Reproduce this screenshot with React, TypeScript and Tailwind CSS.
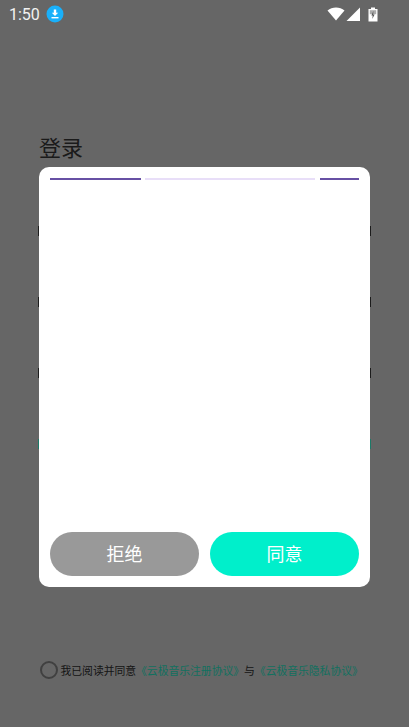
import React from 'react';

const cjk = { fontFamily: '"Noto Sans CJK SC", "Noto Sans", sans-serif' };

const StatusBar = () => (
  <div className="flex h-[28px] items-center pl-[9px] pr-[31px]">
    <span className="pt-[1px] text-[16px] leading-none text-[#f2f2f2]" style={{ fontFamily: 'Roboto, sans-serif' }}>
      1:50
    </span>
    <svg className="ml-[6px]" width="18" height="18" viewBox="0 0 18 18">
      <circle cx="9" cy="9" r="8.5" fill="#19b0fa" />
      <path d="M7.8 4.5h2.4v3.3h2L9 11 5.8 7.8h2z" fill="#fff" />
      <rect x="5.5" y="12" width="7" height="1.4" fill="#fff" />
    </svg>
    <div className="ml-auto flex items-center">
      <svg width="18" height="14" viewBox="0 0 18 14">
        <path d="M0.5 3.6C5 -0.4 13 -0.4 17.5 3.6L9 13.5z" fill="#fff" />
      </svg>
      <svg className="ml-[1px]" width="14" height="14" viewBox="0 0 14 14">
        <path d="M14 0.5V14H0.5z" fill="#fff" />
      </svg>
      <svg className="ml-[8px]" width="10" height="15" viewBox="0 0 10 15">
        <path d="M3 0.5h4v1.5h2.5v12.5h-9V2H3z" fill="#fff" />
        <path d="M1.8 3.2h6.4v4H1.8z" fill="#666666" opacity="0.55" />
        <path d="M5.4 4L3.4 8.4h1.3L4.3 12l2.3-4.6H5.2z" fill="#555555" />
      </svg>
    </div>
  </div>
);

const BehindRow = ({ teal }: { teal?: boolean }) => (
  <div className={`h-[10px] w-[333px] border-x ${teal ? 'border-[#1d7a68]' : 'border-[#1c1c1c]'}`} />
);

const App = () => {
  return (
    <div className="relative flex h-[727px] w-[409px] flex-col overflow-hidden bg-[#666666]" style={cjk}>
      <StatusBar />

      <h1 className="ml-[39px] mt-[102px] text-[22px] font-normal leading-[32px] text-[#1a1a1a]">登录</h1>

      {/* form under the dialog, only its edges show */}
      <div className="ml-[38px] mt-[64px] flex flex-col gap-[61px]">
        <BehindRow />
        <BehindRow />
        <BehindRow />
        <BehindRow teal />
      </div>

      <div className="mt-auto mb-[47px] ml-[40px] flex items-center">
        <div className="h-[18px] w-[18px] rounded-full border-2 border-[#404040]" />
        <p className="ml-[2.5px] whitespace-nowrap text-[10.8px] leading-[20px] text-[#141414]">
          我已阅读并同意<span className="text-[#11705f]">《云极音乐注册协议》</span>与<span className="text-[#11705f]">《云极音乐隐私协议》</span>
        </p>
      </div>

      <div className="absolute left-[39px] top-[167px] flex h-[420px] w-[331px] flex-col rounded-[10px] bg-white px-[11px] pb-[11px] pt-[10.5px]">
        <div className="flex h-[2.5px] gap-[4px]">
          <div className="w-[91px] bg-[#6750a4]" />
          <div className="w-[170px] bg-[#e8def8]" />
          <div className="ml-[1px] w-[39px] bg-[#6750a4]" />
        </div>
        <div className="mt-auto flex gap-[11px]">
          <button className="h-[44px] w-[149px] rounded-full bg-[#999999] pb-[2px] text-[18px] text-white">拒绝</button>
          <button className="h-[44px] w-[149px] rounded-full bg-[#00efcb] pb-[2px] text-[18px] text-white">同意</button>
        </div>
      </div>
    </div>
  );
};

export default App;
